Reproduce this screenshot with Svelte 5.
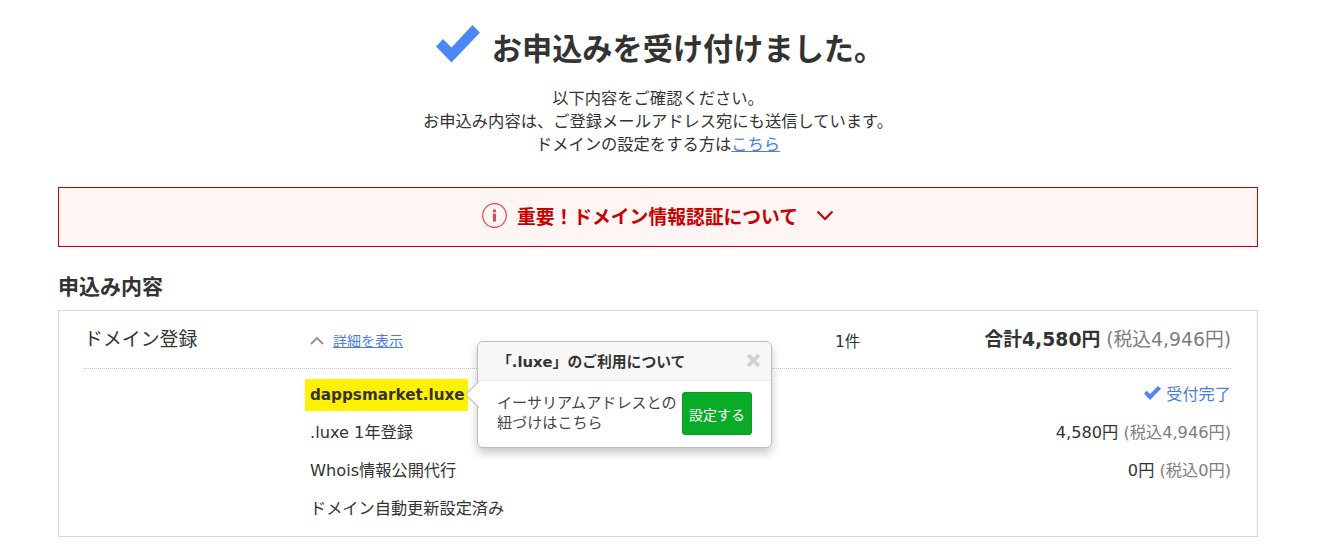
<script lang="ts">
	const rows = [
		{ name: '.luxe 1年登録', price: '4,580円', tax: '(税込4,946円)' },
		{ name: 'Whois情報公開代行', price: '0円', tax: '(税込0円)' }
	];
</script>

<main class="page">
	<header class="done">
		<h1>
			<svg class="done-check" viewBox="0 0 44 38" aria-hidden="true">
				<path d="M0 21.5 L7 14 L15.5 22.5 L36.5 0 L44 7.5 L15.5 37.5 Z" />
			</svg>
			お申込みを受け付けました。
		</h1>
		<p>以下内容をご確認ください。<br />お申込み内容は、ご登録メールアドレス宛にも送信しています。<br />ドメインの設定をする方は<a href="#top">こちら</a></p>
	</header>

	<div class="alert">
		<svg class="alert-icon" viewBox="0 0 25 25" aria-hidden="true">
			<circle cx="12.5" cy="12.5" r="11.8" />
			<rect x="11" y="6.5" width="3" height="2.8" />
			<rect x="11" y="10.5" width="3" height="8" />
		</svg>
		<strong>重要！ドメイン情報認証について</strong>
		<svg class="alert-arrow" viewBox="0 0 18 11" aria-hidden="true">
			<path d="M1.5 1.5 L9 9 L16.5 1.5" />
		</svg>
	</div>

	<h2>申込み内容</h2>

	<section class="order">
		<div class="order-head">
			<span class="order-title">ドメイン登録</span>
			<div class="order-toggle">
				<svg viewBox="0 0 14 9" aria-hidden="true"><path d="M1 8 L7 2 L13 8" /></svg>
				<a href="#top">詳細を表示</a>
			</div>
			<span class="order-count">1件</span>
			<div class="order-total"><b>合計4,580円</b> <span class="tax">(税込4,946円)</span></div>
		</div>

		<div class="order-body">
			<div class="line line-domain">
				<mark>dappsmarket.luxe</mark>
				<span class="accepted">
					<svg viewBox="0 0 17 14" aria-hidden="true"><path d="M0 7.5 L2.8 4.8 L6 8 L14 0 L17 2.8 L6 14 Z" /></svg>
					受付完了
				</span>
			</div>
			{#each rows as row}
				<div class="line">
					<span>{row.name}</span>
					<span>{row.price} <span class="tax">{row.tax}</span></span>
				</div>
			{/each}
			<div class="line"><span>ドメイン自動更新設定済み</span></div>

			<aside class="popover">
				<div class="popover-head">
					<span>「.luxe」のご利用について</span>
					<svg class="popover-close" viewBox="0 0 14 14" aria-hidden="true"><path d="M2 2 L12 12 M12 2 L2 12" /></svg>
				</div>
				<div class="popover-body">
					<p>イーサリアムアドレスとの紐づけはこちら</p>
					<button type="button">設定する</button>
				</div>
				<span class="popover-arrow"></span>
			</aside>
		</div>
	</section>
</main>

<style>
	:global(body) {
		background: #fff;
		color: #333;
		font-family: 'DejaVu Sans', 'Noto Sans CJK JP', sans-serif;
		font-size: 16px;
	}

	.page {
		width: 1200px;
		margin-left: 58px;
		padding-top: 19px;
	}

	.done {
		text-align: center;
	}

	h1 {
		display: flex;
		justify-content: center;
		align-items: center;
		gap: 12px;
		margin: 0;
		height: 56px;
		padding-left: 4px;
		font-size: 30.2px;
		font-weight: 700;
	}

	.done-check {
		width: 44px;
		height: 38px;
		margin-top: -7px;
		fill: #4b87f5;
	}

	.done p {
		margin: 12px 0 0;
		font-size: 16.3px;
		line-height: 23px;
	}

	a {
		color: #4b7de8;
	}

	.alert {
		display: flex;
		justify-content: center;
		align-items: center;
		height: 54px;
		margin-top: 31px;
		padding-bottom: 4px;
		border: 1px solid #cc0000;
		background: #fff5f5;
		color: #cc0000;
		font-size: 18.8px;
	}

	.alert-icon {
		width: 25px;
		height: 25px;
		margin-right: 10px;
	}

	.alert-icon circle {
		fill: none;
		stroke: #dc4a4a;
		stroke-width: 1.2;
	}

	.alert-icon rect {
		fill: #dc4a4a;
	}

	.alert-arrow {
		width: 18px;
		height: 11px;
		margin-left: 18px;
		fill: none;
		stroke: #cc0000;
		stroke-width: 2.2;
	}

	h2 {
		margin: 25px 0 8px;
		font-size: 21px;
		line-height: 30px;
		font-weight: 700;
	}

	.order {
		height: 225px;
		border: 1px solid #d5d5d5;
		padding: 0 26px 0 25px;
	}

	.order-head {
		display: grid;
		grid-template-columns: 226px 525px 1fr auto;
		align-items: center;
		height: 52px;
		padding-bottom: 5px;
		border-bottom: 1px dotted #c4c4c4;
	}

	.order-title {
		font-size: 18.9px;
	}

	.order-toggle {
		display: flex;
		align-items: center;
		gap: 9px;
		margin-top: 6px;
		font-size: 14px;
	}

	.order-toggle svg {
		width: 14px;
		height: 9px;
		fill: none;
		stroke: #8a9299;
		stroke-width: 1.8;
	}

	.order-count {
		margin-top: 6px;
		font-size: 15.5px;
	}

	.order-total {
		font-size: 18.8px;
	}

	.order-total b {
		font-weight: 700;
	}

	.tax {
		color: #7d7d7d;
	}

	.order-body {
		position: relative;
		padding: 5px 0 0 226px;
	}

	.line {
		display: flex;
		justify-content: space-between;
		align-items: center;
		height: 38px;
		font-size: 16.2px;
	}

	mark {
		display: block;
		margin: 4px 0 0 -5px;
		padding: 0 3px 0 5px;
		background: #fff100;
		color: #333;
		font-size: 15.2px;
		font-weight: 700;
		line-height: 32px;
	}

	.accepted {
		display: flex;
		align-items: center;
		gap: 5px;
		color: #4b7de8;
	}

	.accepted svg {
		width: 17px;
		height: 14px;
		fill: #4b87f5;
	}

	.popover {
		position: absolute;
		left: 393px;
		top: -28px;
		width: 295px;
		height: 107px;
		box-sizing: border-box;
		border: 1px solid #bdbdbd;
		border-radius: 6px;
		background: #fff;
		box-shadow: 0 5px 10px rgba(0, 0, 0, 0.22);
	}

	.popover-head {
		display: flex;
		justify-content: space-between;
		align-items: center;
		height: 36px;
		padding: 0 10px 2px 19px;
		border-bottom: 1px solid #ebebeb;
		border-radius: 6px 6px 0 0;
		background: #f7f7f7;
		font-size: 14.8px;
		font-weight: 700;
	}

	.popover-close {
		width: 15px;
		height: 15px;
		fill: none;
		stroke: #d2d2d2;
		stroke-width: 3.6;
	}

	.popover-body {
		display: flex;
		align-items: center;
		gap: 5px;
		padding: 11px 19px 0 19px;
	}

	.popover-body p {
		margin: -2px 0 0;
		flex: 1;
		font-size: 15.1px;
		line-height: 20px;
		color: #444;
	}

	button {
		width: 70px;
		height: 43px;
		flex: none;
		padding: 0;
		border: 1px solid #0a9c22;
		border-radius: 3px;
		background: #0aab27;
		color: #fff;
		font: inherit;
		font-size: 14px;
	}

	.popover-arrow {
		position: absolute;
		left: -9px;
		top: 43px;
		width: 19px;
		height: 19px;
		box-sizing: border-box;
		border-left: 1px solid #bdbdbd;
		border-bottom: 1px solid #bdbdbd;
		background: #fff;
		transform: rotate(45deg);
	}
</style>
